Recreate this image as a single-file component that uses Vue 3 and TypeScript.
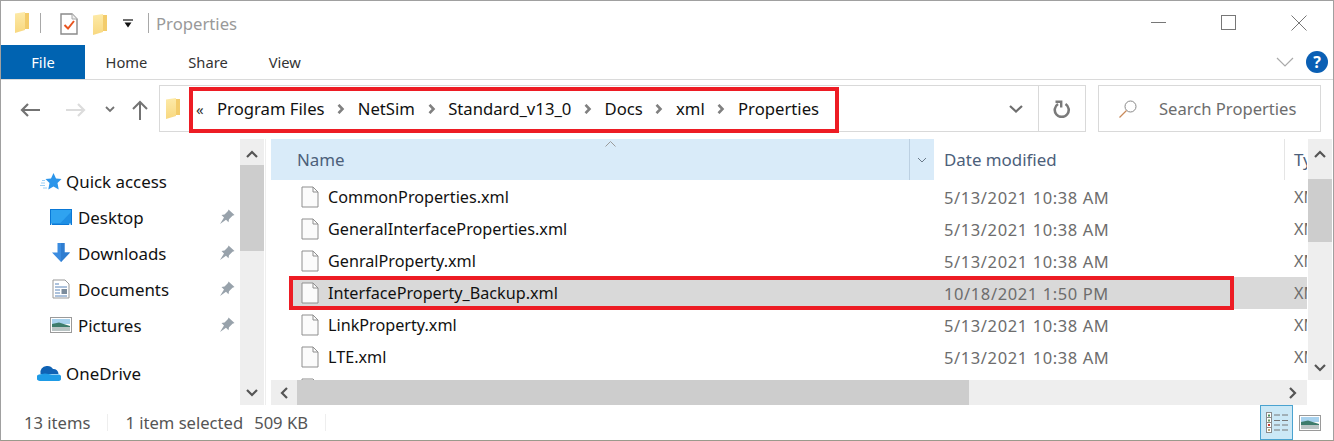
<template>
  <div class="window">
    <div class="titlebar">
      <svg class="folder-ic qa-folder" viewBox="0 0 14 21"><use href="#folder" /></svg>
      <span class="sep sep-a"></span>
      <svg class="check-ic" width="18" height="22" viewBox="0 0 18 22">
        <path d="M1 1h11l5 5v15H1z" fill="#fff" stroke="#8a8a8a" stroke-width="1.400" />
        <path d="M12 1v5h5" fill="#f0f0f0" stroke="#a8a8a8" />
        <path d="M4.500 12l3.500 3.500 6-7.500" fill="none" stroke="#e8541f" stroke-width="2" />
      </svg>
      <svg class="folder-ic low-folder" viewBox="0 0 14 21"><use href="#folder" /></svg>
      <svg class="drop-ic" width="10" height="10" viewBox="0 0 10 10">
        <path d="M0 1h10" stroke="#111" stroke-width="1.200" />
        <path d="M1.500 3.500h7L5 8.500z" fill="#111" />
      </svg>
      <span class="sep sep-b"></span>
      <span class="title">Properties</span>
      <div class="win-controls">
        <svg width="16" height="16" viewBox="0 0 16 16"><path d="M0 7.500h15" stroke="#777" /></svg>
        <svg width="16" height="16" viewBox="0 0 16 16"><rect x="0.500" y="0.500" width="14" height="14" fill="none" stroke="#777" /></svg>
        <svg width="16" height="16" viewBox="0 0 16 16"><path d="M0.500 0.500l15 15M15.500 0.500l-15 15" stroke="#777" /></svg>
      </div>
    </div>

    <div class="ribbon">
      <div class="tab tab-file">File</div>
      <div class="tab">Home</div>
      <div class="tab">Share</div>
      <div class="tab">View</div>
      <svg class="ribbon-chev" width="18" height="10" viewBox="0 0 18 10"><path d="M1 1l8 8 8-8" fill="none" stroke="#aaa" stroke-width="1.200" /></svg>
      <div class="help">?</div>
    </div>

    <div class="navbar">
      <svg class="nav-back" width="20" height="14" viewBox="0 0 20 14"><path d="M20 7H2M8 1L2 7l6 6" fill="none" stroke="#737373" stroke-width="2.200" /></svg>
      <svg class="nav-fwd" width="20" height="14" viewBox="0 0 20 14"><path d="M0 7h18M12 1l6 6-6 6" fill="none" stroke="#dcdcdc" stroke-width="2.200" /></svg>
      <svg class="nav-down" width="10" height="7" viewBox="0 0 10 7"><path d="M1 1l4 4 4-4" fill="none" stroke="#737373" stroke-width="1.800" /></svg>
      <svg class="nav-up" width="16" height="20" viewBox="0 0 16 20"><path d="M8 20V2M1 9l7-7 7 7" fill="none" stroke="#737373" stroke-width="2" /></svg>
      <div class="address">
        <svg class="folder-ic addr-folder" viewBox="0 0 14 21"><use href="#folder" /></svg>
        <span class="addr-more">«</span>
        <template v-for="(crumb, i) in crumbs" :key="crumb">
          <span class="crumb">{{ crumb }}</span>
          <svg v-if="i < crumbs.length - 1" class="crumb-sep" width="8" height="10" viewBox="0 0 8 10"><path d="M1.500 0.800l4 4.200-4 4.200" fill="none" stroke="#808080" stroke-width="2.600" /></svg>
        </template>
        <svg class="addr-drop" width="14" height="8" viewBox="0 0 14 8"><path d="M1 1l6 5.500L13 1" fill="none" stroke="#6e6e6e" stroke-width="2.200" /></svg>
        <div class="refresh">
          <svg width="18" height="18" viewBox="0 0 18 18"><path d="M12.500 4a7 7 0 1 1-7.500 0" fill="none" stroke="#7a7a7a" stroke-width="2.600" /><path d="M2.500 1.800h5.700v5.700" fill="none" stroke="#7a7a7a" stroke-width="2.400" /></svg>
        </div>
      </div>
      <div class="searchbox">
        <svg width="18" height="18" viewBox="0 0 18 18"><circle cx="11.500" cy="6.500" r="5.500" fill="none" stroke="#888" /><path d="M7.500 10.500L0.500 17.500" stroke="#c98a5a" stroke-width="1.200" /></svg>
        <span>Search Properties</span>
      </div>
    </div>

    <div class="content">
      <aside class="sidebar">
        <div class="tree">
          <div class="tree-item top quick">
            <svg width="22" height="17" viewBox="0 0 22 17"><path d="M13.500 0L16 5.500l5.500.500-4 4 1.200 6.500-5.200-3-5.200 3 1.200-6.500-4-4 5.500-.500z" fill="#2b95ea" /><path d="M0 12.500h5M1 10h4M2 7.500h3M3 15h4" stroke="#9ccff5" /></svg>
            <span>Quick access</span>
          </div>
          <div v-for="item in pinned" :key="item" class="tree-item">
            <svg v-if="item === 'Desktop'" width="22" height="17" viewBox="0 0 22 17"><rect width="22" height="16" fill="#0a78d6" /><rect x="1" y="1" width="20" height="13.500" fill="#2fa3f0" /><path d="M10 14.500L21 3v11.500z" fill="#1f8fe4" /><path d="M1 15.200h1M19 15.200h2" stroke="#fff" /></svg>
            <svg v-else-if="item === 'Downloads'" width="20" height="20" viewBox="0 0 20 20"><path d="M6.500 0h7v9.500H19L10 19 1 9.500h5.500z" fill="#3b8ce0" /><path d="M10 0h3.500v9.500H19L10 19z" fill="#2f7dd0" /></svg>
            <svg v-else-if="item === 'Documents'" width="18" height="20" viewBox="0 0 18 20"><path d="M1 1h12l4 4v14H1z" fill="#fff" stroke="#999" /><path d="M3 5h4M3 8h12M3 11h5M3 14h5M3 17h12" stroke="#5b84b8" /><rect x="9.500" y="10" width="5.500" height="5" fill="#7c8c9c" /></svg>
            <svg v-else width="22" height="16" viewBox="0 0 22 16"><rect x="0.500" y="0.500" width="21" height="15" fill="#fff" stroke="#9a9a9a" /><rect x="2" y="2" width="18" height="5" fill="#a8d2ee" /><path d="M2 7l7-1.500L20 9v1H2z" fill="#3d7c6c" /><rect x="2" y="10" width="18" height="4" fill="#b9c4c4" /></svg>
            <span>{{ item }}</span>
            <svg class="pin" width="16" height="16" viewBox="0 0 16 16"><path d="M9.500 0.500l6 5.500-2 .800-3.500 3.500-.500 3-2.500-2.500L1 15l4-6.500L2.500 6l3-.500L9 2z" fill="#98a2ab" /></svg>
          </div>
          <div class="tree-item top drive">
            <svg width="24" height="16" viewBox="0 0 24 16"><path d="M3.500 9a6.500 6.500 0 0 1 6-8 6.500 6.500 0 0 1 6.500 3 5 5 0 0 1 5.500 5z" fill="#0f62b4" /><path d="M2.800 16a3.300 3.300 0 0 1-.800-6.500L8 8.500l7 1 7 0a3.400 3.400 0 0 1 0 6.500z" fill="#1e9be6" /></svg>
            <span>OneDrive</span>
          </div>
        </div>
        <div class="vscroll side-scroll">
          <svg class="scroll-arrow" width="12" height="8" viewBox="0 0 12 8"><path d="M1 7l5-5 5 5" fill="none" stroke="#555" stroke-width="2.200" /></svg>
          <div class="thumb side-thumb"></div>
          <div class="spacer"></div>
          <svg class="scroll-arrow" width="12" height="8" viewBox="0 0 12 8"><path d="M1 1l5 5 5-5" fill="none" stroke="#555" stroke-width="2.200" /></svg>
        </div>
      </aside>

      <main class="files">
        <div class="files-inner">
          <div class="header">
            <div class="col-name">
              <span>Name</span>
              <svg class="sort-ic" width="11" height="6" viewBox="0 0 11 6"><path d="M0.500 5.500l5-5 5 5" fill="none" stroke="#9a9a9a" /></svg>
              <div class="head-drop"><svg width="10" height="6" viewBox="0 0 10 6"><path d="M1 1l4 4 4-4" fill="none" stroke="#6a7a8a" /></svg></div>
            </div>
            <div class="col-date">Date modified</div>
            <div class="col-type">Type</div>
          </div>
          <div class="rows">
            <div v-for="f in files" :key="f.name" class="row" :class="{ selected: f.selected }">
              <svg class="file-ic" width="18" height="22" viewBox="0 0 18 22"><path d="M1 1h11l5 5v15H1z" fill="#fbfbfb" stroke="#8f8f8f" /><path d="M12 1v5h5" fill="none" stroke="#8f8f8f" /></svg>
              <span class="file-name">{{ f.name }}</span>
              <span class="file-date">{{ f.date }}</span>
              <span class="file-type">XML</span>
            </div>
            <div class="row">
              <svg class="file-ic" width="18" height="22" viewBox="0 0 18 22"><path d="M1 1h11l5 5v15H1z" fill="#fbfbfb" stroke="#8f8f8f" /></svg>
            </div>
          </div>
          <div class="hscroll">
            <svg class="scroll-arrow" width="8" height="12" viewBox="0 0 8 12"><path d="M7 1L2 6l5 5" fill="none" stroke="#555" stroke-width="2.200" /></svg>
            <div class="thumb h-thumb"></div>
            <div class="spacer"></div>
            <svg class="scroll-arrow" width="8" height="12" viewBox="0 0 8 12"><path d="M1 1l5 5-5 5" fill="none" stroke="#555" stroke-width="2.200" /></svg>
          </div>
        </div>
        <div class="vscroll file-scroll">
          <svg class="scroll-arrow" width="12" height="8" viewBox="0 0 12 8"><path d="M1 7l5-5 5 5" fill="none" stroke="#555" stroke-width="2.200" /></svg>
          <div class="thumb file-thumb"></div>
          <div class="spacer"></div>
          <svg class="scroll-arrow" width="12" height="8" viewBox="0 0 12 8"><path d="M1 1l5 5 5-5" fill="none" stroke="#555" stroke-width="2.200" /></svg>
        </div>
      </main>
    </div>

    <div class="statusbar">
      <span class="count">13 items</span>
      <span class="status-sep"></span>
      <span class="sel">1 item selected</span>
      <span class="size">509 KB</span>
      <span class="status-sep"></span>
      <div class="views">
        <div class="view active">
          <svg width="22" height="22" viewBox="0 0 22 22">
            <rect x="0.500" y="0.500" width="5" height="20" fill="#fff" stroke="#8a8a8a" />
            <path d="M1 5.500h4M1 10.500h4M1 15.500h4" stroke="#8a8a8a" />
            <rect x="2" y="2.500" width="2" height="2" fill="#4a8a5a" /><rect x="2" y="7.500" width="2" height="2" fill="#6a9a5a" /><rect x="2" y="12" width="2" height="2" fill="#c83a2a" /><rect x="2" y="17" width="2" height="2" fill="#b8a870" />
            <path d="M8 3h6M16 3h6M8 8.500h6M16 8.500h6M8 13h6M16 13h6M8 18h6M16 18h6" stroke="#777" />
          </svg>
        </div>
        <div class="view">
          <svg width="22" height="16" viewBox="0 0 22 16"><rect x="0.500" y="0.500" width="21" height="15" fill="#fff" stroke="#9a9a9a" /><rect x="2" y="2" width="18" height="5" fill="#a8d2ee" /><path d="M2 7l7-1.500L20 9v1H2z" fill="#3d7c6c" /><rect x="2" y="10" width="18" height="4" fill="#b9c4c4" /></svg>
        </div>
      </div>
    </div>

    <!-- red annotation boxes drawn over the screenshot -->
    <div class="mark mark-path"></div>
    <div class="mark mark-row"></div>

    <svg width="0" height="0" class="defs">
      <defs>
        <linearGradient id="folder-front" x1="0" y1="0" x2="0" y2="1">
          <stop offset="0" stop-color="#fdeaa8" />
          <stop offset="1" stop-color="#f8d880" />
        </linearGradient>
        <g id="folder">
          <path d="M5 1h9v16H5z" fill="#f3cc6b" />
          <path d="M0 1.500L10 0v18L0 21z" fill="url(#folder-front)" />
        </g>
      </defs>
    </svg>
  </div>
</template>

<script setup lang="ts">
interface FileRow {
  name: string;
  date: string;
  selected?: boolean;
}

const crumbs: string[] = ["Program Files", "NetSim", "Standard_v13_0", "Docs", "xml", "Properties"];
const pinned: string[] = ["Desktop", "Downloads", "Documents", "Pictures"];

const files: FileRow[] = [
  { name: "CommonProperties.xml", date: "5/13/2021 10:38 AM" },
  { name: "GeneralInterfaceProperties.xml", date: "5/13/2021 10:38 AM" },
  { name: "GenralProperty.xml", date: "5/13/2021 10:38 AM" },
  { name: "InterfaceProperty_Backup.xml", date: "10/18/2021 1:50 PM", selected: true },
  { name: "LinkProperty.xml", date: "5/13/2021 10:38 AM" },
  { name: "LTE.xml", date: "5/13/2021 10:38 AM" },
];
</script>

<style>
html,
body {
  margin: 0;
  background: #fff;
}
</style>

<style scoped>
.window {
  position: relative;
  box-sizing: border-box;
  width: 1334px;
  height: 441px;
  border: 1px solid #a0a0a0;
  border-bottom-color: #9a9a8c;
  background: #fff;
  overflow: hidden;
  font-family: "Noto Sans", "Open Sans", sans-serif;
  font-size: 16px;
  color: #111;
  display: flex;
  flex-direction: column;
}

.folder-ic {
  width: 14px;
  height: 21px;
  flex: none;
}

.titlebar {
  height: 44px;
  flex: none;
  display: flex;
  align-items: center;
  padding-left: 14px;
}

.qa-folder {
  margin-bottom: 1px;
}

.low-folder {
  margin-top: 2px;
}

.sep {
  width: 1px;
  height: 20px;
  background: #a8a8a8;
  flex: none;
}

.sep-a {
  margin: 0 19px 0 11px;
}

.check-ic {
  margin-right: 15px;
  margin-top: 2px;
}

.drop-ic {
  margin-left: 16px;
  margin-top: 2px;
}

.sep-b {
  margin: 0 7px 0 15px;
}

.title {
  color: #999;
  font-size: 16.7px;
}

.win-controls {
  margin-left: auto;
  display: flex;
  gap: 54px;
  padding-right: 26px;
  margin-bottom: 1px;
}

.ribbon {
  height: 35px;
  flex: none;
  display: flex;
  align-items: center;
  border-bottom: 1px solid #dadada;
  box-sizing: border-box;
}

.tab {
  padding: 0 20.5px;
  font-size: 14.7px;
  color: #333;
}

.tab-file {
  width: 84px;
  height: 100%;
  padding: 0;
  box-sizing: border-box;
  text-align: center;
  line-height: 34px;
  background: #0063b1;
  color: #fff;
}

.ribbon-chev {
  margin-left: auto;
  margin-right: 12px;
}

.help {
  width: 22px;
  height: 22px;
  border-radius: 50%;
  background: #0a5fb4;
  color: #fff;
  font-weight: 700;
  font-size: 16px;
  line-height: 22px;
  text-align: center;
  margin-right: 5px;
}

.navbar {
  height: 59px;
  flex: none;
  display: flex;
  align-items: center;
  padding-left: 19px;
}

.nav-fwd {
  margin-left: 26px;
}

.nav-down {
  margin-left: 19px;
}

.nav-up {
  margin-left: 17px;
}

.address {
  width: 927px;
  height: 47px;
  margin-left: 11px;
  margin-top: -2px;
  box-sizing: border-box;
  border: 1px solid #d9d9d9;
  display: flex;
  align-items: center;
  padding-left: 6px;
  font-size: 16.7px;
}

.addr-folder {
  margin-right: 16px;
}

.addr-more {
  width: 21px;
  flex: none;
  font-size: 15px;
  color: #333;
}

.crumb-sep {
  margin: 0 12.6px;
  flex: none;
}

.addr-drop {
  margin-left: auto;
  margin-right: 15px;
}

.refresh {
  width: 47px;
  height: 100%;
  border-left: 1px solid #d9d9d9;
  display: flex;
  align-items: center;
  justify-content: center;
  box-sizing: border-box;
}

.searchbox {
  width: 223px;
  height: 47px;
  margin-left: 12px;
  margin-top: -2px;
  box-sizing: border-box;
  border: 1px solid #d9d9d9;
  display: flex;
  align-items: center;
  gap: 22px;
  padding-left: 20px;
  font-size: 16.6px;
  color: #6d6d6d;
}

.content {
  flex: 1;
  min-height: 0;
  display: flex;
}

.sidebar {
  width: 265px;
  flex: none;
  display: flex;
  border-right: 1px solid #eee;
  box-sizing: border-box;
}

.tree {
  width: 239px;
  flex: none;
  padding-top: 24px;
  box-sizing: border-box;
  font-size: 16.9px;
}

.tree-item {
  height: 36px;
  display: flex;
  align-items: center;
  position: relative;
  padding-left: 49px;
  gap: 6px;
}

.tree-item > svg:first-child {
  width: 22px;
  flex: none;
}

.tree-item.top {
  padding-left: 39px;
  gap: 4px;
}

.tree-item.drive {
  padding-left: 36px;
  gap: 5px;
}

.tree-item.drive > svg:first-child {
  width: 24px;
}

.drive {
  margin-top: 12px;
}

.pin {
  margin-left: auto;
  margin-right: 5px;
}

.vscroll {
  width: 24px;
  flex: none;
  background: #eee;
  display: flex;
  flex-direction: column;
  align-items: center;
}

.scroll-arrow {
  flex: none;
}

.vscroll > .scroll-arrow:first-child {
  margin: 11px 0 7px;
}

.vscroll > .scroll-arrow:last-child {
  margin: 8px 0 8px;
}

.thumb {
  background: #cdcdcd;
}

.side-thumb {
  width: 100%;
  height: 86px;
}

.file-thumb {
  width: 100%;
  height: 63px;
  margin-top: 14px;
}

.spacer {
  flex: 1;
}

.files {
  flex: 1;
  min-width: 0;
  display: flex;
  padding-left: 5px;
}

.files-inner {
  flex: 1;
  min-width: 0;
  display: flex;
  flex-direction: column;
}

.header {
  height: 41px;
  flex: none;
  display: flex;
  align-items: center;
  color: #4c607a;
  font-size: 16.9px;
}

.col-name {
  width: 663px;
  height: 100%;
  flex: none;
  background: #d9ebf9;
  display: flex;
  align-items: center;
  padding-left: 26px;
  box-sizing: border-box;
  position: relative;
}

.sort-ic {
  position: absolute;
  left: 334px;
  top: 2px;
}

.head-drop {
  margin-left: auto;
  width: 25px;
  height: 100%;
  border-left: 1px solid #bcd0e2;
  display: flex;
  align-items: center;
  justify-content: center;
  box-sizing: border-box;
}

.col-date {
  width: 351px;
  flex: none;
  padding-left: 10px;
  box-sizing: border-box;
  height: 100%;
  line-height: 41px;
  border-right: 1px solid #e5e5e5;
}

.col-type {
  padding-left: 9px;
  flex: 1;
  min-width: 0;
  overflow: hidden;
  white-space: nowrap;
}

.rows {
  flex: 1;
  min-height: 0;
  overflow: hidden;
  padding-top: 1px;
  font-size: 16.2px;
}

.row {
  height: 32px;
  display: flex;
  align-items: center;
  margin-left: 18px;
  padding-left: 12px;
  white-space: nowrap;
  overflow: hidden;
}

.row.selected {
  background: #d9d9d9;
}

.file-ic {
  flex: none;
}

.file-name {
  width: 625px;
  padding-left: 9px;
  box-sizing: border-box;
  flex: none;
}

.file-date {
  width: 350px;
  flex: none;
  color: #6d6d6d;
  font-size: 16.5px;
  letter-spacing: 0.6px;
}

.file-type {
  color: #6d6d6d;
  flex: none;
}

.hscroll {
  height: 25px;
  flex: none;
  background: #eee;
  display: flex;
  align-items: center;
  padding: 0 10px 0 9px;
}

.h-thumb {
  width: 672px;
  height: 25px;
  margin-left: 9px;
}

.file-scroll {
  margin: 0 1px 25px;
}

.statusbar {
  height: 35px;
  flex: none;
  display: flex;
  align-items: center;
  color: #555;
  font-size: 16.6px;
  padding-left: 23px;
}

.status-sep {
  width: 1px;
  height: 17px;
  background: #eee;
  margin: 0 17px;
}

.size {
  margin-left: 11px;
}

.views {
  margin-left: auto;
  display: flex;
  align-items: center;
  gap: 5px;
  padding-right: 12px;
}

.view {
  width: 33px;
  height: 35px;
  display: flex;
  align-items: center;
  justify-content: center;
  box-sizing: border-box;
}

.view + .view {
  width: 23px;
}

.view.active {
  background: #cbe8f6;
  border: 1px solid #4aa3d0;
}

.mark {
  position: absolute;
  box-sizing: border-box;
  border: 4px solid #ed1c24;
}

.mark-path {
  left: 188px;
  top: 86px;
  width: 650px;
  height: 46px;
}

.mark-row {
  left: 288px;
  top: 275px;
  width: 945px;
  height: 34px;
}

.defs {
  position: absolute;
}
</style>
